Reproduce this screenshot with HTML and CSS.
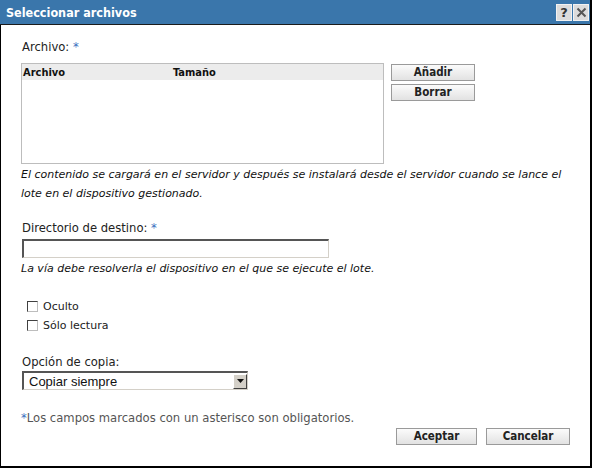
FILE: index.html
```html
<!DOCTYPE html>
<html lang="es">
<head>
<meta charset="utf-8">
<title>Seleccionar archivos</title>
<link rel="stylesheet" href="styles.css">
</head>
<body>
<div class="window">
  <div class="titlebar">
    <span class="title">Seleccionar archivos</span>
    <span class="tb-buttons">
      <span class="tb-btn">?</span>
      <span class="tb-btn tb-close">
        <svg width="11" height="11" viewBox="0 0 11 11"><path d="M1.5 1.5 L9.5 9.5 M9.5 1.5 L1.5 9.5" stroke="#555" stroke-width="2"/></svg>
      </span>
    </span>
  </div>
  <div class="content">
    <div class="label">Archivo: <span class="req">*</span></div>
    <div class="files-row">
      <div class="file-table">
        <div class="file-head">
          <span class="col-name">Archivo</span>
          <span class="col-size">Tamaño</span>
        </div>
      </div>
      <div class="side-buttons">
        <button class="btn btn-side">Añadir</button>
        <button class="btn btn-side">Borrar</button>
      </div>
    </div>
    <p class="help help-first">El contenido se cargará en el servidor y después se instalará desde el servidor cuando se lance el lote en el dispositivo gestionado.</p>

    <div class="label label-dir">Directorio de destino: <span class="req">*</span></div>
    <div class="text-input"></div>
    <p class="help help-dir">La vía debe resolverla el dispositivo en el que se ejecute el lote.</p>

    <div class="checks">
      <div class="check-row"><span class="checkbox"></span><span class="check-label">Oculto</span></div>
      <div class="check-row"><span class="checkbox"></span><span class="check-label">Sólo lectura</span></div>
    </div>

    <div class="label label-copy">Opción de copia:</div>
    <div class="select">
      <span class="select-text">Copiar siempre</span>
      <span class="select-arrow">
        <svg width="7" height="4" viewBox="0 0 7 4"><path d="M0 0 H7 L3.5 4 Z" fill="#111"/></svg>
      </span>
    </div>

    <div class="note"><span class="req">*</span>Los campos marcados con un asterisco son obligatorios.</div>
    <div class="footer-buttons">
      <button class="btn btn-footer">Aceptar</button>
      <button class="btn btn-footer">Cancelar</button>
    </div>
  </div>
</div>
</body>
</html>
```
FILE: styles.css
```css
html, body {
  margin: 0;
  padding: 0;
  background: #ffffff;
}
body {
  font-family: "DejaVu Sans", Verdana, sans-serif;
  font-size: 11px;
  color: #222;
}
.window {
  width: 589px;
  height: 466px;
  border-left: 1px solid #000;
  border-right: 2px solid #000;
  border-bottom: 2px solid #000;
  background: #fff;
  display: flex;
  flex-direction: column;
}
.titlebar {
  height: 24px;
  background: #3a76ab;
  border-bottom: 1px solid #1b1b1b;
  display: flex;
  align-items: center;
  justify-content: space-between;
  margin-left: -1px;
  padding-left: 6px;
}
.title {
  color: #fff;
  font-family: "DejaVu Sans Condensed", "DejaVu Sans", sans-serif;
  font-stretch: condensed;
  font-weight: bold;
  font-size: 12.5px;
}
.tb-buttons {
  display: flex;
  gap: 1px;
  margin-right: 1px;
  align-self: flex-start;
  margin-top: 4px;
}
.tb-btn {
  width: 14px;
  height: 15px;
  background: #dcdcdc;
  border: 1px solid #f2f2f2;
  display: flex;
  align-items: center;
  justify-content: center;
  font-weight: bold;
  font-size: 13px;
  color: #333;
  line-height: 1;
}
.content {
  padding: 0 20px 0 20px;
  display: flex;
  flex-direction: column;
}
.label {
  line-height: 16px;
  height: 16px;
  font-size: 11.6px;
  color: #222;
  margin-top: 14px;
  padding-left: 1px;
}
.req {
  color: #3a70c0;
}
.files-row {
  display: flex;
  margin-top: 8px;
}
.file-table {
  width: 361px;
  height: 99px;
  border: 1px solid #bdbdbd;
  background: #fff;
}
.file-head {
  height: 16px;
  background: #ececec;
  display: flex;
  align-items: center;
  font-family: "DejaVu Sans Condensed", "DejaVu Sans", sans-serif;
  font-stretch: condensed;
  font-weight: bold;
  font-size: 11px;
  color: #111;
}
.col-name {
  width: 150px;
  padding-left: 1px;
}
.side-buttons {
  display: flex;
  flex-direction: column;
  gap: 3px;
  margin-left: 7px;
  margin-top: 1px;
}
.btn {
  font-family: "DejaVu Sans Condensed", "DejaVu Sans", sans-serif;
  font-stretch: condensed;
  font-weight: bold;
  font-size: 11.5px;
  color: #222;
  background: linear-gradient(#fbfbfb, #e2e2e2);
  border: 1px solid #9a9a9a;
  padding: 0;
  margin: 0;
  height: 17px;
  line-height: 15px;
}
.btn-side {
  width: 84px;
}
.help {
  margin: 0;
  font-style: italic;
  font-size: 11px;
  color: #111;
}
.help-first {
  line-height: 19px;
  margin-top: 1px;
}
.label-dir {
  margin-top: 17px;
}
.text-input {
  width: 304px;
  height: 16px;
  margin-top: 3px;
  margin-left: 1px;
  border-top: 2px solid #555;
  border-left: 2px solid #555;
  border-right: 1px solid #d4d0c8;
  border-bottom: 1px solid #d4d0c8;
  background: #fff;
}
.help-dir {
  line-height: 16px;
  margin-top: 3px;
}
.checks {
  margin-top: 20px;
  display: flex;
  flex-direction: column;
}
.check-row {
  height: 19px;
  display: flex;
  align-items: center;
  padding-left: 6px;
}
.checkbox {
  width: 9px;
  height: 9px;
  border-top: 1px solid #404040;
  border-left: 1px solid #404040;
  border-right: 1px solid #bdbdbd;
  border-bottom: 1px solid #bdbdbd;
  background: #fff;
  margin-right: 5px;
}
.check-label {
  font-size: 11px;
  color: #222;
}
.label-copy {
  margin-top: 19px;
}
.select {
  width: 223px;
  height: 16px;
  margin-top: 1px;
  margin-left: 1px;
  border-top: 2px solid #555;
  border-left: 2px solid #555;
  border-right: 1px solid #d4d0c8;
  border-bottom: 1px solid #d4d0c8;
  display: flex;
  align-items: center;
  justify-content: space-between;
  font-size: 13px;
  color: #111;
  font-family: "Liberation Sans", Arial, sans-serif;
}
.select-text {
  padding-left: 5px;
}
.select-arrow {
  width: 14px;
  height: 15px;
  margin-right: 0;
  background: #d4d0c8;
  border-top: 1px solid #fff;
  border-left: 1px solid #fff;
  border-right: 1px solid #404040;
  border-bottom: 1px solid #404040;
  box-sizing: border-box;
  display: flex;
  align-items: center;
  justify-content: center;
}
.note {
  margin-top: 20px;
  line-height: 16px;
  font-size: 11.6px;
  color: #555;
}
.footer-buttons {
  display: flex;
  justify-content: flex-end;
  gap: 9px;
  margin-top: 2px;
}
.btn-footer:first-child {
  width: 81px;
}
.btn-footer:last-child {
  width: 84px;
}
```
